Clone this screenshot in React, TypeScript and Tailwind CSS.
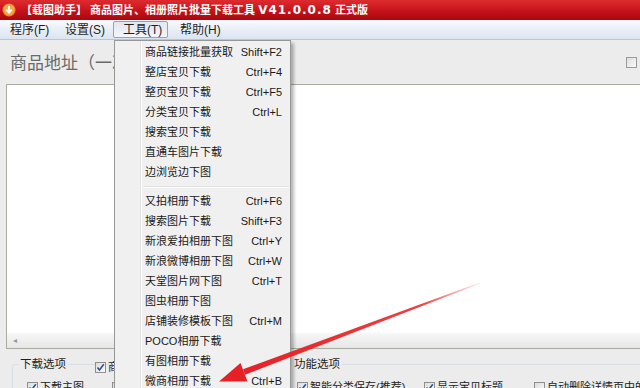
import type { ReactNode } from "react";

const groupA: [string, string][] = [
  ["商品链接批量获取", "Shift+F2"],
  ["整店宝贝下载", "Ctrl+F4"],
  ["整页宝贝下载", "Ctrl+F5"],
  ["分类宝贝下载", "Ctrl+L"],
  ["搜索宝贝下载", ""],
  ["直通车图片下载", ""],
  ["边浏览边下图", ""],
];

const groupB: [string, string][] = [
  ["又拍相册下载", "Ctrl+F6"],
  ["搜索图片下载", "Shift+F3"],
  ["新浪爱拍相册下图", "Ctrl+Y"],
  ["新浪微博相册下图", "Ctrl+W"],
  ["天堂图片网下图", "Ctrl+T"],
  ["图虫相册下图", ""],
  ["店铺装修模板下图", "Ctrl+M"],
  ["POCO相册下载", ""],
  ["有图相册下载", ""],
  ["微商相册下载", "Ctrl+B"],
];

function Box({ checked = true }: { checked?: boolean }) {
  return (
    <span className="relative inline-block w-[11px] h-[11px] shrink-0 border border-[#8e8f8f] bg-gradient-to-br from-[#dcdcdc] to-[#fbfbfb]">
      {checked && (
        <svg viewBox="0 0 11 11" className="absolute -left-px -top-px w-[11px] h-[11px]">
          <path d="M2.5 5.5 L4.5 8 L8.8 2.2" fill="none" stroke="#2d4f97" strokeWidth="1.6" />
        </svg>
      )}
    </span>
  );
}

function Opt({ label, checked = true, className = "" }: { label: string; checked?: boolean; className?: string }) {
  return (
    <span className={`flex items-center gap-[2px] whitespace-nowrap shrink-0 text-[11px] text-[#222] ${className}`}>
      <Box checked={checked} />
      {label}
    </span>
  );
}

function MenuRow({ label, keys }: { label: string; keys: string }) {
  return (
    <div className="h-5 flex items-center justify-between pl-[30px] pr-[8px] text-[11px] text-[#1a1a1a]">
      <span>{label}</span>
      <span>{keys}</span>
    </div>
  );
}

function TopItem({ children, className = "" }: { children: ReactNode; className?: string }) {
  return (
    <span className={`h-[17px] w-[55px] flex items-center pl-[9px] border border-transparent text-[12px] text-[#1e1e1e] ${className}`}>
      {children}
    </span>
  );
}

export default function App() {
  return (
    <div className="relative w-[640px] h-[388px] overflow-hidden bg-[#ececec] font-['Liberation_Sans','Noto_Sans_CJK_SC',sans-serif]">
      {/* title bar */}
      <div className="h-5 flex items-center pl-[2px] bg-gradient-to-b from-[#de2b2f] via-[#c8131b] to-[#a9070d]">
        <svg viewBox="0 0 14 14" className="w-[14px] h-[14px] shrink-0">
          <circle cx="7" cy="7" r="6.5" fill="#f08a1c" />
          <circle cx="7" cy="6.5" r="5.5" fill="#f7a844" />
          <path d="M7 3 V9 M4.3 6.6 L7 9.6 L9.7 6.6" fill="none" stroke="#fff" strokeWidth="1.8" />
        </svg>
        <span className="ml-[5px] text-white font-bold text-[11px] whitespace-nowrap">
          【载图助手】 商品图片、相册照片批量下载工具{" "}
          <span className="font-['DejaVu_Sans',sans-serif] text-[12px] tracking-[1px]">V41.0.0.8</span> 正式版
        </span>
      </div>

      {/* menu bar */}
      <div className="h-5 flex items-center bg-gradient-to-b from-[#f8fafd] to-[#dbe4f1] border-b border-[#bcc6d2]">
        <TopItem>程序(F)</TopItem>
        <TopItem>设置(S)</TopItem>
        <TopItem className="ml-[3px] rounded-[2px] !border-[#98a2ae] bg-gradient-to-b from-[#e2e7ee] to-[#f3f6fa]">工具(T)</TopItem>
        <TopItem className="ml-[2px]">帮助(H)</TopItem>
      </div>

      {/* address label */}
      <div className="h-[44px] flex items-center justify-between pl-[10px] pr-[3px]">
        <span className="text-[17px] text-[#6a6a6a] font-['Noto_Sans_CJK_SC',sans-serif]">商品地址（一次一行）</span>
        <span className="w-[11px] h-[11px] border border-[#9a9a9a] bg-gradient-to-br from-[#dedede] to-[#fafafa]" />
      </div>

      {/* url box */}
      <div className="ml-[6px] h-[265px] flex flex-col border-l border-t border-b border-[#a8ad9f]">
        <div className="flex-1 bg-white" />
        <div className="h-[15px] flex items-center pl-[6px] bg-gradient-to-b from-[#f7f7f7] to-[#e6e6e6] text-[8px] text-[#9a9a9a]">◂</div>
      </div>

      {/* option groups */}
      <div className="flex pt-[7px]">
        <fieldset className="relative shrink-0 ml-[12px] w-[270px] h-[60px] pl-[5px] border border-[#d5dfe5] rounded-[3px]">
          <legend className="px-[2px] text-[11.5px] leading-4 text-[#1e1e1e]">下载选项</legend>
          <span className="absolute left-[82px] -top-[13px]">
            <Opt label="商品属性" />
          </span>
          <div className="flex items-start gap-[28px] ml-[9px] pt-[7px]">
            <Opt label="下载主图" />
            <Opt label="下载描述" />
          </div>
        </fieldset>
        <fieldset className="shrink-0 ml-[6px] w-[380px] h-[60px] pl-[3px] border border-[#d5dfe5] rounded-[3px]">
          <legend className="px-[2px] text-[11.5px] leading-4 text-[#1e1e1e]">功能选项</legend>
          <div className="flex items-start ml-[5px] pt-[7px]">
            <Opt label="智能分类保存(推荐)" className="w-[127px]" />
            <Opt label="显示宝贝标题" className="w-[110px]" />
            <Opt label="自动删除详情页中的图片" checked={false} />
          </div>
        </fieldset>
      </div>

      {/* dropdown menu */}
      <div className="absolute left-[114px] top-[40px] w-[177px] h-[360px] pt-px border border-[#979797] bg-[#f0f0f0] shadow-[3px_3px_3px_rgba(0,0,0,0.28)]">
        <div className="absolute left-[25px] top-0 bottom-0 w-[2px] border-l border-[#e2e3e3] border-r border-r-white" />
        <div className="relative">
          {groupA.map(([l, k]) => (
            <MenuRow key={l} label={l} keys={k} />
          ))}
          <div className="h-[9px] flex items-center pl-[28px] pr-[1px]">
            <div className="w-full h-[2px] border-t border-[#e0e0e0] border-b border-b-white" />
          </div>
          {groupB.map(([l, k]) => (
            <MenuRow key={l} label={l} keys={k} />
          ))}
        </div>
      </div>

      {/* red arrow annotation */}
      <svg className="absolute inset-0 pointer-events-none" width="640" height="388" viewBox="0 0 640 388">
        <defs>
          <linearGradient id="fade" x1="480" y1="283" x2="244" y2="371" gradientUnits="userSpaceOnUse">
            <stop offset="0" stopColor="#ee3a3a" stopOpacity="0.1" />
            <stop offset="0.25" stopColor="#ea2b2d" stopOpacity="0.9" />
            <stop offset="1" stopColor="#e62126" />
          </linearGradient>
        </defs>
        <polygon points="480.2,283.4 479.8,282.6 243,369.2 245,374.8" fill="url(#fade)" />
        <polygon points="219,381.5 247.5,381.5 240.5,363" fill="#e62126" />
      </svg>
    </div>
  );
}
